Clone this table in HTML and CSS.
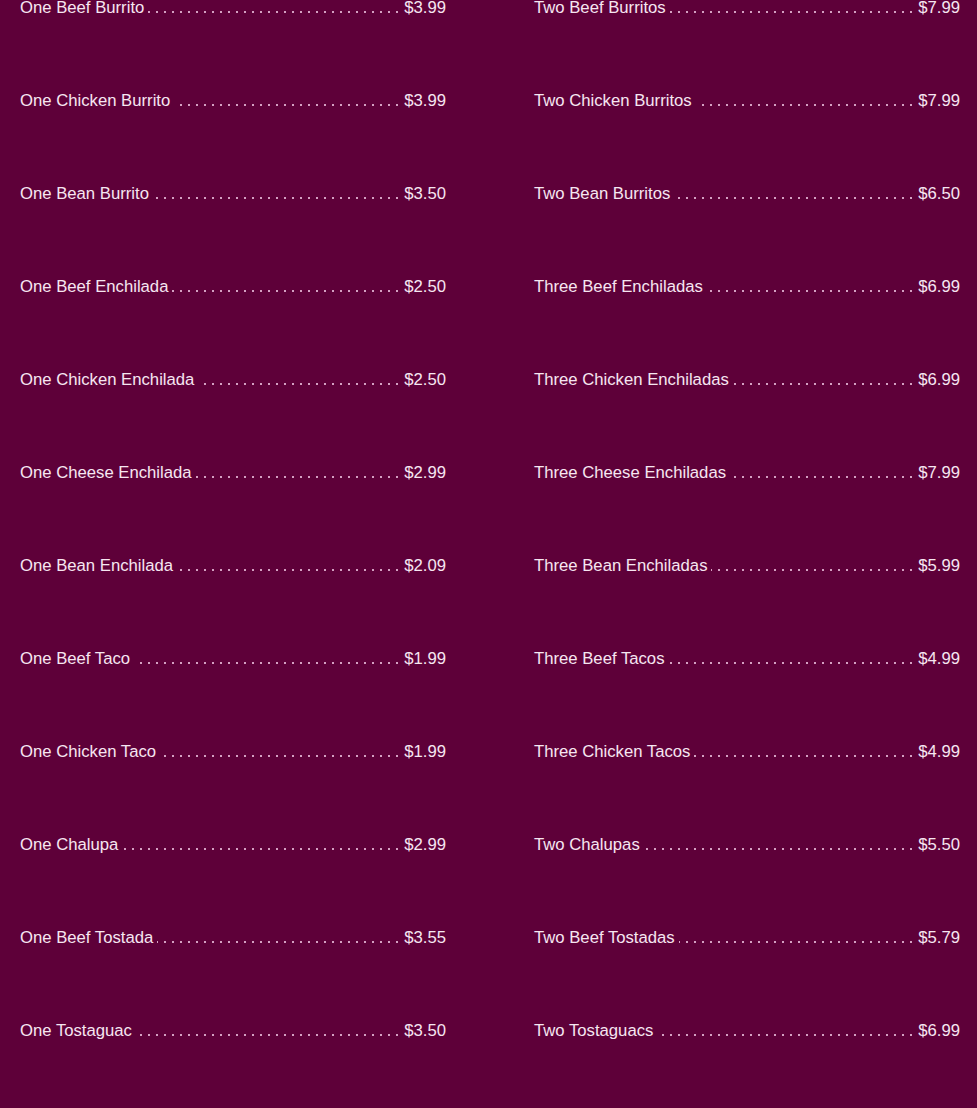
FILE: index.html
```html
<!DOCTYPE html>
<html>
<head>
<meta charset="utf-8">
<link rel="stylesheet" href="styles.css">
</head>
<body>
<div class="menu">
  <ul class="col">
    <li class="item"><span class="name">One Beef Burrito</span><span class="price">$3.99</span></li>
    <li class="item"><span class="name">One Chicken Burrito</span><span class="price">$3.99</span></li>
    <li class="item"><span class="name">One Bean Burrito</span><span class="price">$3.50</span></li>
    <li class="item"><span class="name">One Beef Enchilada</span><span class="price">$2.50</span></li>
    <li class="item"><span class="name">One Chicken Enchilada</span><span class="price">$2.50</span></li>
    <li class="item"><span class="name">One Cheese Enchilada</span><span class="price">$2.99</span></li>
    <li class="item"><span class="name">One Bean Enchilada</span><span class="price">$2.09</span></li>
    <li class="item"><span class="name">One Beef Taco</span><span class="price">$1.99</span></li>
    <li class="item"><span class="name">One Chicken Taco</span><span class="price">$1.99</span></li>
    <li class="item"><span class="name">One Chalupa</span><span class="price">$2.99</span></li>
    <li class="item"><span class="name">One Beef Tostada</span><span class="price">$3.55</span></li>
    <li class="item"><span class="name">One Tostaguac</span><span class="price">$3.50</span></li>
  </ul>
  <ul class="col">
    <li class="item"><span class="name">Two Beef Burritos</span><span class="price">$7.99</span></li>
    <li class="item"><span class="name">Two Chicken Burritos</span><span class="price">$7.99</span></li>
    <li class="item"><span class="name">Two Bean Burritos</span><span class="price">$6.50</span></li>
    <li class="item"><span class="name">Three Beef Enchiladas</span><span class="price">$6.99</span></li>
    <li class="item"><span class="name">Three Chicken Enchiladas</span><span class="price">$6.99</span></li>
    <li class="item"><span class="name">Three Cheese Enchiladas</span><span class="price">$7.99</span></li>
    <li class="item"><span class="name">Three Bean Enchiladas</span><span class="price">$5.99</span></li>
    <li class="item"><span class="name">Three Beef Tacos</span><span class="price">$4.99</span></li>
    <li class="item"><span class="name">Three Chicken Tacos</span><span class="price">$4.99</span></li>
    <li class="item"><span class="name">Two Chalupas</span><span class="price">$5.50</span></li>
    <li class="item"><span class="name">Two Beef Tostadas</span><span class="price">$5.79</span></li>
    <li class="item"><span class="name">Two Tostaguacs</span><span class="price">$6.99</span></li>
  </ul>
</div>
</body>
</html>
```
FILE: styles.css
```css
html, body {
  margin: 0;
  padding: 0;
  background: #5e0039;
  height: 100%;
  overflow: hidden;
}
body {
  font-family: "Liberation Sans", Arial, sans-serif;
  font-size: 16.7px;
  color: #f6e6f1;
}
.menu {
  display: grid;
  grid-template-columns: 426px 426px;
  column-gap: 88px;
  padding: 0 17px 0 20px;
  margin-top: -2px;
}
.col {
  list-style: none;
  margin: 0;
  padding: 0;
}
.item {
  display: flex;
  justify-content: space-between;
  align-items: flex-start;
  height: 93px;
  line-height: 19px;
  background-image: radial-gradient(circle at 4px 1px, #d6a3c4 0.7px, rgba(214,163,196,0) 1.2px);
  background-size: 8px 2px;
  background-repeat: repeat-x;
  background-position: -3px 13px;
}
.name {
  background: #5e0039;
  padding-right: 4px;
}
.price {
  background: #5e0039;
  padding-left: 4px;
}
```
